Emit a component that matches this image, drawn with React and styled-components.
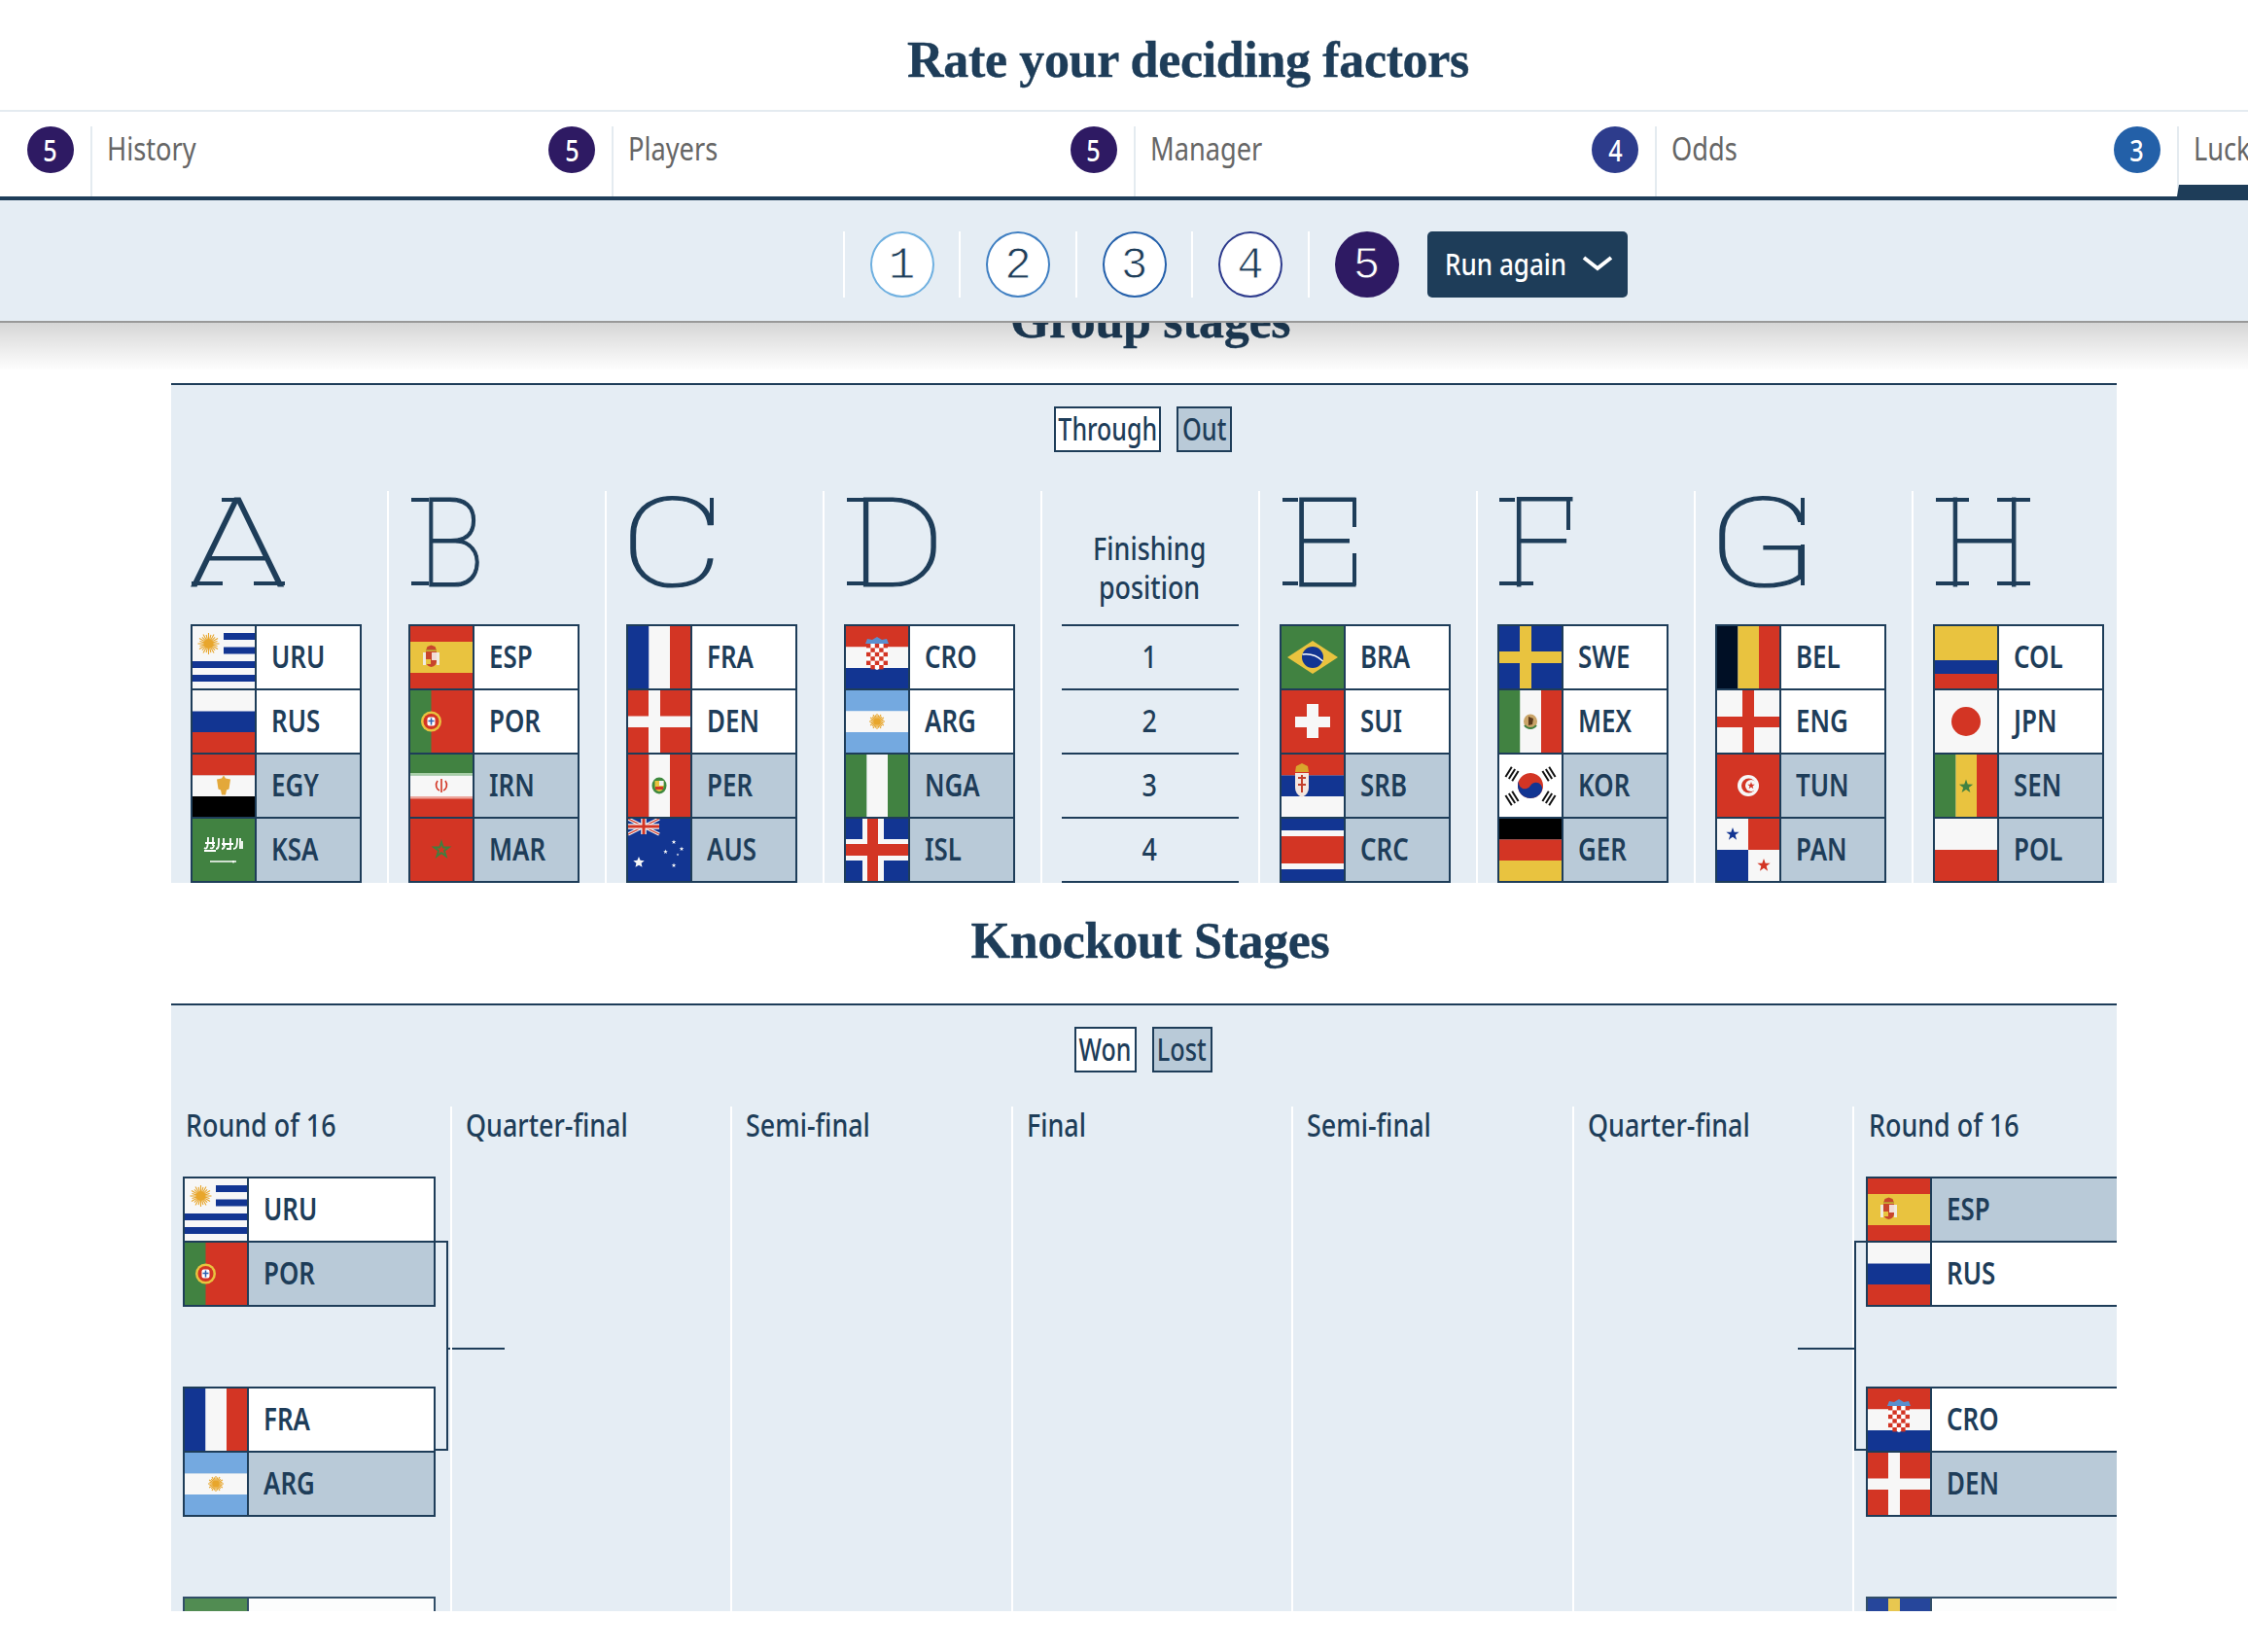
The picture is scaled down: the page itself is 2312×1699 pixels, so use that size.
import React from 'react';
import styled, { createGlobalStyle } from 'styled-components';

const NAVY = '#1e3d59';
const PANEL = '#e5edf4';
const LOST = '#b9cad8';
const R = '#d33524', B = '#123592', W = '#f7f7f7', G = '#418241', Y = '#e9c33f', L = '#74a9e0', K = '#000';

const SANS = `"Noto Sans", sans-serif`;
const THIN = `Roboto, "Noto Sans", sans-serif`;
const SLAB = `"Liberation Mono", monospace`;

const GlobalStyle = createGlobalStyle`
html, body {
    margin: 0;
    background: #fff;
    overflow: hidden;
}
`;

const Page = styled.div`
width: 2312px;
height: 1699px;
overflow: hidden;
font-family: ${SANS};
color: ${NAVY};
`;

// none of the installed fonts has this width, so the sans is squeezed
const Narrow = styled.span`
display: inline-block;
white-space: nowrap;
transform: scaleX(${p => p.$x || 0.84});
transform-origin: ${p => (p.$center ? 'center' : 'left')} center;
`;

const Header = styled.header`
position: relative;
z-index: 2;
background: #fff;
&::after {
    content: '';
    position: absolute;
    left: 0;
    right: 0;
    top: 100%;
    height: 50px;
    background: linear-gradient(rgba(0, 0, 0, 0.16), rgba(0, 0, 0, 0));
}
`;

const MainTitle = styled.h1`
margin: 0;
height: 113px;
padding-left: 132px;
box-sizing: border-box;
text-align: center;
font: bold 52px/124px "Liberation Serif", serif;
letter-spacing: -0.35px;
-webkit-text-stroke: 0.4px ${NAVY};
`;

const Tabs = styled.div`
display: flex;
overflow: hidden;
border-top: 2px solid #e4ebf0;
border-bottom: 4px solid ${NAVY};
height: 87px;
`;

const Tab = styled.div`
flex: 0 0 536.4px;
display: flex;
box-sizing: border-box;
padding: 15px 0 0 28px;
`;

const Score = styled.div`
flex: none;
width: 48px;
height: 48px;
border-radius: 50%;
background: ${p => p.$bg};
color: #fff;
display: flex;
align-items: center;
justify-content: center;
font-size: 30px;
font-weight: 500;
`;

const TabLabel = styled.div`
flex: 1;
margin-left: 17px;
padding-left: 15px;
border-left: 2px solid #e4ebf0;
border-bottom: ${p => (p.$active ? `12px solid ${NAVY}` : 'none')};
font-size: 32px;
line-height: 45px;
color: #666;
`;

const FilterBar = styled.div`
display: flex;
justify-content: center;
padding: 32px 0 0 229px;
background: ${PANEL};
border-bottom: 2px solid #999;
height: 92px;
`;

const FilterItem = styled.div`
width: 117.5px;
height: 68px;
border-left: 2px solid #fff;
display: flex;
justify-content: center;
`;

// the mono digits have the right feet but are heavy, so a stroke in the fill colour thins them
const FilterCircle = styled.div`
width: 66px;
height: 68px;
box-sizing: border-box;
padding-top: 3px;
border-radius: 50%;
border: 2px solid ${p => p.$color};
background: ${p => (p.$filled ? p.$color : '#fff')};
color: ${p => (p.$filled ? '#fff' : NAVY)};
-webkit-text-stroke: 0.9px ${p => (p.$filled ? p.$color : '#fff')};
display: flex;
align-items: center;
justify-content: center;
font: 46px ${SLAB};
`;

const RunButton = styled.button`
margin-left: 4px;
width: 206px;
height: 68px;
border: 0;
border-radius: 5px;
background: ${NAVY};
color: #fff;
font: 500 31px ${SANS};
display: flex;
align-items: center;
padding: 0 0 2px 18px;
gap: 16px;
`;

const ButtonText = styled(Narrow)`
margin-right: -24px;
`;

const Content = styled.main`
margin-top: -62px;
`;

const SectionTitle = styled.h2`
margin: 0 0 34px 176px;
padding: 30px 0 0 0;
width: 2014px;
text-align: center;
font: bold 52px/60px "Liberation Serif", serif;
letter-spacing: -0.35px;
-webkit-text-stroke: 0.4px ${NAVY};
`;

const Panel = styled.section`
margin-left: 176px;
width: 2001px;
border-top: 2px solid ${NAVY};
background: ${PANEL};
overflow: hidden;
`;

const Legend = styled.div`
display: flex;
justify-content: center;
gap: 16px;
padding: 22px 2px 0 0;
margin-bottom: ${p => p.$gap}px;
`;

const Chip = styled.div`
width: ${p => p.$w}px;
height: 47px;
box-sizing: border-box;
border: 2px solid ${NAVY};
background: ${p => (p.$lost ? LOST : '#fff')};
display: flex;
justify-content: center;
font-size: 32px;
font-weight: 500;
line-height: 42px;
`;

const GroupGrid = styled.div`
display: grid;
grid-template-columns: 222px repeat(7, 224px) 1fr;
`;

const GroupCol = styled.div`
box-sizing: border-box;
padding-left: 20px;
& + & {
    border-left: 2px solid #fff;
}
`;

const GroupLetter = styled.div`
height: 137px;
position: relative;
`;

const LetterGlyph = styled.span`
display: inline-block;
font: 100 128px/108px ${THIN};
-webkit-text-stroke: 1.2px ${NAVY};
transform-origin: 0 0;
transform: translateX(${p => p.$shift}px) scaleX(${p => p.$scale});
`;

// the slabs and ticks the plain font lacks, laid over the glyph
const Slab = styled.i`
position: absolute;
background: ${NAVY};
left: ${p => p.$x}px;
top: ${p => p.$y + 7}px;
width: ${p => p.$w}px;
height: ${p => p.$h}px;
`;

const FinishHead = styled.div`
height: 137px;
box-sizing: border-box;
padding-top: 39px;
width: 180px;
text-align: center;
font-size: 32px;
line-height: 40px;
font-weight: 500;
`;

const FinishRow = styled.div`
width: 180px;
padding-right: 2px;
height: 64px;
border-top: 2px solid ${NAVY};
text-align: center;
font-size: 32px;
font-weight: 500;
line-height: 62px;
&:last-child {
    border-bottom: 2px solid ${NAVY};
}
`;

const TeamBox = styled.div`
width: ${p => p.$width}px;
box-sizing: border-box;
border: 2px solid ${NAVY};
border-top: 0;
opacity: ${p => (p.$faded ? 0.9 : 1)};
`;

const TeamRow = styled.div`
display: flex;
height: 64px;
border-top: 2px solid ${NAVY};
background: ${p => (p.$lost ? LOST : '#fff')};
`;

const FlagBox = styled.svg`
flex: none;
width: 64px;
height: 64px;
display: block;
border-right: 2px solid ${NAVY};
`;

const TeamCode = styled.div`
padding-left: 15px;
font-size: 32px;
font-weight: 600;
line-height: 62px;
`;

const KnockoutGrid = styled.div`
display: grid;
grid-template-columns: 287px repeat(5, 288.4px) 1fr;
height: 519px;
`;

const RoundCol = styled.div`
box-sizing: border-box;
padding-left: 14px;
position: relative;
& + & {
    border-left: 2px solid #fff;
}
`;

const RoundTitle = styled.div`
font-size: 32px;
font-weight: 500;
line-height: 38px;
margin: 0 0 34px ${p => p.$inset}px;
`;

const Matches = styled.div`
display: flex;
flex-direction: column;
gap: 82px;
margin-left: ${p => p.$offset}px;
`;

const MatchPair = styled.div`
position: relative;
display: flex;
flex-direction: column;
gap: 82px;
`;

// bracket line that joins two matches, sits over the column
const Connector = styled.div`
position: absolute;
top: 66px;
height: 216px;
box-sizing: border-box;
width: 13px;
border: 2px solid ${NAVY};
${p => (p.$right ? 'left: -12px; border-right: 0;' : 'left: 260px; border-left: 0;')}
&::after {
    content: '';
    position: absolute;
    top: 108px;
    width: 60px;
    height: 2px;
    background: ${NAVY};
    ${p => (p.$right ? 'right: 100%; ' : 'left: 100%;')}
}
`;

const star = (cx, cy, r, inner = 0.4) => {
    const pts = [];
    for (let i = 0; i < 10; i++) {
        const a = -Math.PI / 2 + (i * Math.PI) / 5;
        const d = i % 2 ? r * inner : r;
        pts.push(`${(cx + d * Math.cos(a)).toFixed(2)},${(cy + d * Math.sin(a)).toFixed(2)}`);
    }
    return pts.join(' ');
};

const Sun = ({ x, y, r, color = '#e8a62c' }) => {
    const rays = [];
    for (let i = 0; i < 24; i++) {
        const a = (i * Math.PI) / 12;
        const len = i % 2 ? r * 0.85 : r;
        rays.push(
            <line
                key={i}
                x1={x + r * 0.4 * Math.cos(a)}
                y1={y + r * 0.4 * Math.sin(a)}
                x2={x + len * Math.cos(a)}
                y2={y + len * Math.sin(a)}
                stroke={color}
                strokeWidth="1.100"
            />
        );
    }
    return (
        <g>
            {rays}
            <circle cx={x} cy={y} r={r * 0.45} fill={color} />
        </g>
    );
};

const Hz = ({ c }) => (
    <>
        <rect width="64" height="21.5" fill={c[0]} />
        <rect y="21.5" width="64" height="21.5" fill={c[1]} />
        <rect y="43" width="64" height="21" fill={c[2]} />
    </>
);

const Vt = ({ c }) => (
    <>
        <rect width="21.5" height="64" fill={c[0]} />
        <rect x="21.5" width="21.5" height="64" fill={c[1]} />
        <rect x="43" width="21" height="64" fill={c[2]} />
    </>
);

const Bg = ({ c }) => <rect width="64" height="64" fill={c} />;

const Cross = ({ x, w, y, h, c }) => (
    <>
        <rect x={x} width={w} height="64" fill={c} />
        <rect y={y} width="64" height={h} fill={c} />
    </>
);

const Trigram = ({ x, y, rot }) => (
    <g transform={`translate(${x} ${y}) rotate(${rot})`} fill="#111">
        <rect x="-6" y="-5" width="12" height="2" />
        <rect x="-6" y="-1" width="12" height="2" />
        <rect x="-6" y="3" width="12" height="2" />
    </g>
);

const SpainArms = () => (
    <g>
        <rect x="13" y="27" width="3" height="13" fill="#f0ece0" />
        <rect x="27" y="27" width="3" height="13" fill="#f0ece0" />
        <path d="M16 26h11v10q0 5-5.500 6q-5.500-1-5.500-6z" fill="#c8452c" />
        <rect x="22" y="27" width="5" height="8" fill="#f2dcd4" />
        <rect x="16" y="34" width="5" height="5" fill="#e9c33f" />
        <path d="M16 25l1.500-4 4-1.500 4 1.500 1.500 4z" fill="#c8452c" />
        <rect x="16" y="24" width="11" height="1.500" fill="#b8922c" />
    </g>
);

const FLAGS = {
    URU: (
        <>
            <Bg c={W} />
            <rect x="32" y="7" width="32" height="7" fill={B} />
            <rect x="32" y="21.5" width="32" height="7" fill={B} />
            <rect y="36" width="64" height="7" fill={B} />
            <rect y="50" width="64" height="7" fill={B} />
            <Sun x={16.5} y={18} r={11} />
        </>
    ),
    RUS: <Hz c={[W, B, R]} />,
    EGY: (
        <>
            <Hz c={[R, W, K]} />
            <path d="M32 21.5l2 3 5 1-1.500 10-2.500 1-1 5h-4l-1-5-2.500-1-1.500-10 5-1z" fill="#e3a83a" />
        </>
    ),
    KSA: (
        <>
            <Bg c={G} />
            <path
                d="M12 30c3 2 4-1 4-11m2 11c2 1 4 0 4-3m-1-8v9m3 3c3 0 3-3 3-11m3 11c3 0 3-3 3-5m-1-6v8m3 3h4v-11m3 11c3 0 4-2 4-11m3 11v-11m2 11v-8M13 25h10M30 26h12M12 33h12"
                stroke="#fff"
                strokeWidth="1.800"
                fill="none"
            />
            <path d="M18 44h27M42 43v2.500" stroke="#fff" strokeWidth="1.500" />
        </>
    ),
    ESP: (
        <>
            <Bg c={R} />
            <rect y="16" width="64" height="32" fill={Y} />
            <SpainArms />
        </>
    ),
    POR: (
        <>
            <Bg c={R} />
            <rect width="21.500" height="64" fill={G} />
            <circle cx="21.500" cy="32" r="10.500" fill="#e9c33f" />
            <circle cx="21.500" cy="32" r="8" fill={R} />
            <rect x="17.500" y="27.500" width="8" height="9" rx="2" fill="#fff" />
            <path d="M21.500 28.500v7M18.500 31.500h6" stroke="#2d5fb0" strokeWidth="1.500" />
        </>
    ),
    IRN: (
        <>
            <Hz c={[G, W, R]} />
            <rect y="19" width="64" height="2.500" fill="#a8cfa8" />
            <rect y="43" width="64" height="2.500" fill="#eda69c" />
            <path d="M32 25v14M28 27c-3 4-1 9 2 10M36 27c3 4 1 9-2 10" stroke={R} strokeWidth="1.600" fill="none" />
        </>
    ),
    MAR: (
        <>
            <Bg c={R} />
            <polygon points={star(32, 32, 11, 0.38)} fill="#3f7f3f" />
            <polygon points={star(32, 32, 5, 0.4)} fill={R} />
        </>
    ),
    FRA: <Vt c={[B, W, R]} />,
    DEN: (
        <>
            <Bg c={R} />
            <Cross x={21} w={12} y={26.500} h={11.500} c={W} />
        </>
    ),
    PER: (
        <>
            <Vt c={[R, W, R]} />
            <ellipse cx="32" cy="32" rx="7.500" ry="8.500" fill="#3f8a3f" />
            <path d="M27.500 27h9v6q0 4-4.500 5q-4.500-1-4.500-5z" fill="#e9c33f" />
            <rect x="32" y="27" width="4.500" height="5" fill="#f2f2f2" />
            <rect x="28" y="33" width="8" height="3" fill={R} />
        </>
    ),
    AUS: (
        <>
            <Bg c={B} />
            <path d="M0 0L32 16M32 0L0 16" stroke={W} strokeWidth="3.500" />
            <path d="M0 0L32 16M32 0L0 16" stroke={R} strokeWidth="1.200" />
            <path d="M16 0V16M0 8H32" stroke={W} strokeWidth="5.500" />
            <path d="M16 0V16M0 8H32" stroke={R} strokeWidth="3" />
            <polygon points={star(11, 45, 6, 0.45)} fill={W} />
            <polygon points={star(47, 24, 2.500)} fill={W} />
            <polygon points={star(38.500, 34, 2.500)} fill={W} />
            <polygon points={star(55, 31, 2.500)} fill={W} />
            <polygon points={star(51, 37, 1.500)} fill={W} />
            <polygon points={star(47, 48, 2.500)} fill={W} />
        </>
    ),
    CRO: (
        <>
            <Hz c={[R, W, B]} />
            <path d="M20 18l2-5 5 1 5-3 5 3 5-1 2 5z" fill="#5b8fce" />
            <path d="M21 18h22v15q0 8-11 12q-11-4-11-12z" fill="#fff" />
            {[0, 1, 2, 3, 4, 5].map(row =>
                [0, 1, 2, 3, 4].map(col => (
                    (row + col) % 2 === 0 && !(row === 5 && (col === 0 || col === 4)) ? (
                        <rect key={`${row}-${col}`} x={21 + col * 4.400} y={18 + row * 4.400} width="4.400" height="4.400" fill={R} />
                    ) : null
                ))
            )}
        </>
    ),
    ARG: (
        <>
            <Hz c={[L, W, L]} />
            <Sun x={32} y={32} r={8} />
        </>
    ),
    NGA: <Vt c={[G, W, G]} />,
    ISL: (
        <>
            <Bg c={B} />
            <Cross x={17} w={22} y={21} h={22} c={W} />
            <Cross x={22} w={11} y={26} h={12} c={R} />
        </>
    ),
    BRA: (
        <>
            <Bg c={G} />
            <path d="M32 15L58 32L32 49L6 32z" fill={Y} />
            <circle cx="32" cy="32" r="11" fill={B} />
            <path d="M21.500 29c8-1 15 1 21 7" stroke="#fff" strokeWidth="1.300" fill="none" />
        </>
    ),
    SUI: (
        <>
            <Bg c={R} />
            <rect x="26" y="14" width="12" height="35" fill={W} />
            <rect x="14" y="27" width="36" height="11" fill={W} />
        </>
    ),
    SRB: (
        <>
            <Hz c={[R, B, W]} />
            <path d="M14 18l1-6 6-3 6 3 1 6z" fill="#d9a62c" />
            <path d="M14 19h14v15q0 7-7 10q-7-3-7-10z" fill="#f3e7e0" />
            <path d="M17 24h8M21 21v18M17 31h8" stroke="#c4402c" strokeWidth="2" />
        </>
    ),
    CRC: (
        <>
            <Bg c={B} />
            <rect y="12" width="64" height="6" fill={W} />
            <rect y="18" width="64" height="28" fill={R} />
            <rect y="46" width="64" height="6" fill={W} />
        </>
    ),
    SWE: (
        <>
            <Bg c={B} />
            <Cross x={21} w={12} y={26} h={12} c={Y} />
        </>
    ),
    MEX: (
        <>
            <Vt c={[G, W, R]} />
            <ellipse cx="32" cy="32" rx="7" ry="7.500" fill="#c9a468" />
            <path d="M26 36c3 4 9 4 12 0" stroke="#3f7f3f" strokeWidth="2" fill="none" />
            <path d="M30 27l5 2-1 6-4 1z" fill="#5c3a1c" />
        </>
    ),
    KOR: (
        <>
            <Bg c="#fff" />
            <g transform="rotate(30 32 32)">
                <circle cx="32" cy="32" r="13" fill={R} />
                <path d="M19 32a13 13 0 0 0 26 0a6.500 6.500 0 0 0-13 0a6.500 6.500 0 0 1-13 0z" fill={B} />
            </g>
            <Trigram x={13} y={20} rot={-58} />
            <Trigram x={51} y={20} rot={58} />
            <Trigram x={13} y={45} rot={58} />
            <Trigram x={51} y={45} rot={-58} />
        </>
    ),
    GER: <Hz c={[K, R, Y]} />,
    BEL: <Vt c={['#000f25', Y, R]} />,
    ENG: (
        <>
            <Bg c={W} />
            <Cross x={26} w={12} y={27} h={11} c={R} />
        </>
    ),
    TUN: (
        <>
            <Bg c={R} />
            <circle cx="32" cy="32" r="11" fill={W} />
            <circle cx="32.500" cy="32" r="7.500" fill={R} />
            <circle cx="35" cy="32" r="6" fill={W} />
            <polygon points={star(35, 32, 4)} fill={R} />
        </>
    ),
    PAN: (
        <>
            <Bg c={W} />
            <rect x="32" width="32" height="32" fill={R} />
            <rect y="32" width="32" height="32" fill={B} />
            <polygon points={star(16, 16, 7)} fill={B} />
            <polygon points={star(48, 48, 7)} fill={R} />
        </>
    ),
    COL: (
        <>
            <Bg c={R} />
            <rect width="64" height="35" fill={Y} />
            <rect y="35" width="64" height="14" fill={B} />
        </>
    ),
    JPN: (
        <>
            <Bg c={W} />
            <circle cx="32" cy="32" r="15" fill={R} />
        </>
    ),
    SEN: (
        <>
            <Vt c={[G, Y, R]} />
            <polygon points={star(32, 33, 7.500)} fill={G} />
        </>
    ),
    POL: (
        <>
            <Bg c={W} />
            <rect y="32" width="64" height="32" fill={R} />
        </>
    ),
};

const Team = ({ code, flag, lost }) => (
    <TeamRow $lost={lost}>
        <FlagBox as="svg" viewBox="0 0 64 64" preserveAspectRatio="none">
            {FLAGS[flag || code]}
        </FlagBox>
        {code && <TeamCode><Narrow $x={0.81}>{code}</Narrow></TeamCode>}
    </TeamRow>
);

// how far each thin glyph is stretched and moved, and its slabs as x, y, w, h
const LETTERS = {
    A: { scale: 1.3, shift: -1.6, slabs: [[32, 0, 18, 4], [1, 86, 32, 4], [65, 86, 32, 4]] },
    B: { scale: 0.87, shift: 11, slabs: [[3, 0, 18, 4], [3, 86, 18, 4]] },
    C: { scale: 1.28, shift: -6.5, slabs: [[86, 0, 4, 28]] },
    D: { scale: 1.17, shift: 6, slabs: [[3, 0, 17, 4], [3, 86, 17, 4]] },
    E: { scale: 1.03, shift: 8, slabs: [[3, 0, 16, 4], [3, 86, 16, 4], [75, 0, 4, 30], [75, 57, 4, 33]] },
    F: { scale: 1, shift: 8, slabs: [[2, 0, 16, 4], [2, 86, 35, 4], [71, 0, 4, 33]] },
    G: { scale: 1.29, shift: -8.6, slabs: [[88, 0, 4, 28], [88, 48, 4, 42]] },
    H: { scale: 0.98, shift: 9, slabs: [[3, 0, 34, 4], [66, 0, 34, 4], [3, 86, 34, 4], [66, 86, 34, 4]] },
};

const GROUPS_LEFT = [
    ['A', ['URU', 'RUS', 'EGY', 'KSA']],
    ['B', ['ESP', 'POR', 'IRN', 'MAR']],
    ['C', ['FRA', 'DEN', 'PER', 'AUS']],
    ['D', ['CRO', 'ARG', 'NGA', 'ISL']],
];
const GROUPS_RIGHT = [
    ['E', ['BRA', 'SUI', 'SRB', 'CRC']],
    ['F', ['SWE', 'MEX', 'KOR', 'GER']],
    ['G', ['BEL', 'ENG', 'TUN', 'PAN']],
    ['H', ['COL', 'JPN', 'SEN', 'POL']],
];

const TABS = [
    ['History', '#2e1a63', 5],
    ['Players', '#2e1a63', 5],
    ['Manager', '#2e1a63', 5],
    ['Odds', '#2d3c8c', 4],
    ['Luck', '#2360a8', 3],
];

const Group = ({ letter, teams }) => {
    const l = LETTERS[letter];
    return (
        <GroupCol>
            <GroupLetter>
                <LetterGlyph $scale={l.scale} $shift={l.shift}>{letter}</LetterGlyph>
                {l.slabs.map(([x, y, w, h]) => (
                    <Slab key={`${x}-${y}`} $x={x} $y={y} $w={w} $h={h} />
                ))}
            </GroupLetter>
            <TeamBox $width={176}>
                {teams.map((t, i) => (
                    <Team key={t} code={t} lost={i > 1} />
                ))}
            </TeamBox>
        </GroupCol>
    );
};

const Match = ({ top, bottom, topLost }) => (
    <TeamBox $width={260}>
        <Team code={top} lost={topLost} />
        <Team code={bottom} lost={!topLost} />
    </TeamBox>
);

const App = () => {
    return (
        <Page>
            <GlobalStyle />
            <Header>
                <MainTitle>Rate your deciding factors</MainTitle>
                <Tabs>
                    {TABS.map(([name, color, score]) => (
                        <Tab key={name}>
                            <Score $bg={color}><Narrow $center>{score}</Narrow></Score>
                            <TabLabel $active={name === 'Luck'}><Narrow $x={0.85}>{name}</Narrow></TabLabel>
                        </Tab>
                    ))}
                </Tabs>
                <FilterBar>
                    <FilterItem><FilterCircle $color="#6fb0e0">1</FilterCircle></FilterItem>
                    <FilterItem><FilterCircle $color="#3f7fc2">2</FilterCircle></FilterItem>
                    <FilterItem><FilterCircle $color="#2460ab">3</FilterCircle></FilterItem>
                    <FilterItem><FilterCircle $color="#2c3a8c">4</FilterCircle></FilterItem>
                    <FilterItem><FilterCircle $color="#2e1a63" $filled>5</FilterCircle></FilterItem>
                    <RunButton>
                        <ButtonText $x={0.84}>Run again</ButtonText>
                        <svg width="32" height="18" viewBox="0 0 32 18">
                            <path d="M2 3l14 11L30 3" fill="none" stroke="#fff" strokeWidth="4" />
                        </svg>
                    </RunButton>
                </FilterBar>
            </Header>
            <Content>
                <SectionTitle>Group stages</SectionTitle>
                <Panel>
                    <Legend $gap={40}>
                        <Chip $w={110}><Narrow $x={0.78} $center>Through</Narrow></Chip>
                        <Chip $w={57} $lost><Narrow $x={0.79} $center>Out</Narrow></Chip>
                    </Legend>
                    <GroupGrid>
                        {GROUPS_LEFT.map(([l, t]) => <Group key={l} letter={l} teams={t} />)}
                        <GroupCol>
                            <FinishHead>
                                <Narrow $center>Finishing</Narrow><br />
                                <Narrow $center>position</Narrow>
                            </FinishHead>
                            {[1, 2, 3, 4].map(n => (
                                <FinishRow key={n}><Narrow $center>{n}</Narrow></FinishRow>
                            ))}
                        </GroupCol>
                        {GROUPS_RIGHT.map(([l, t]) => <Group key={l} letter={l} teams={t} />)}
                    </GroupGrid>
                </Panel>
                <SectionTitle>Knockout Stages</SectionTitle>
                <Panel>
                    <Legend $gap={35}>
                        <Chip $w={64}><Narrow $x={0.78} $center>Won</Narrow></Chip>
                        <Chip $w={62} $lost><Narrow $x={0.79} $center>Lost</Narrow></Chip>
                    </Legend>
                    <KnockoutGrid>
                        <RoundCol>
                            <RoundTitle $inset={1}><Narrow>Round of 16</Narrow></RoundTitle>
                            <Matches $offset={-2}>
                                <MatchPair>
                                    <Match top="URU" bottom="POR" />
                                    <Match top="FRA" bottom="ARG" />
                                    <Connector />
                                </MatchPair>
                                <TeamBox $width={260} $faded><Team flag="BRA" /></TeamBox>
                            </Matches>
                        </RoundCol>
                        <RoundCol><RoundTitle $inset={0}><Narrow>Quarter-final</Narrow></RoundTitle></RoundCol>
                        <RoundCol><RoundTitle $inset={0}><Narrow>Semi-final</Narrow></RoundTitle></RoundCol>
                        <RoundCol><RoundTitle $inset={0}><Narrow>Final</Narrow></RoundTitle></RoundCol>
                        <RoundCol><RoundTitle $inset={0}><Narrow>Semi-final</Narrow></RoundTitle></RoundCol>
                        <RoundCol><RoundTitle $inset={0}><Narrow>Quarter-final</Narrow></RoundTitle></RoundCol>
                        <RoundCol>
                            <RoundTitle $inset={1}><Narrow>Round of 16</Narrow></RoundTitle>
                            <Matches $offset={-2}>
                                <MatchPair>
                                    <Match top="ESP" bottom="RUS" topLost />
                                    <Match top="CRO" bottom="DEN" />
                                    <Connector $right />
                                </MatchPair>
                                <TeamBox $width={260} $faded><Team flag="SWE" /></TeamBox>
                            </Matches>
                        </RoundCol>
                    </KnockoutGrid>
                </Panel>
            </Content>
        </Page>
    );
};

export default App;
